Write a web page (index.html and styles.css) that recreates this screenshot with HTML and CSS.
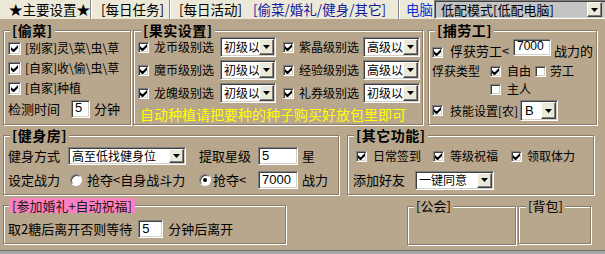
FILE: index.html
```html
<!DOCTYPE html>
<html lang="zh-CN">
<head>
<meta charset="utf-8">
<title>主要设置</title>
<link rel="stylesheet" href="styles.css">
</head>
<body>
<div class="app">
  <div class="tabs">
    <div class="tab sep t1">★主要设置★</div>
    <div class="tab sep t2">[每日任务]</div>
    <div class="tab t3">[每日活动]</div>
    <div class="tab sep t4">[偷菜/婚礼/健身/其它]</div>
    <div class="pc">电脑</div>
    <div class="mode sunk">
      <span class="mode-text">低配模式[低配电脑]</span>
      <span class="btn mode-btn"><svg class="tri" viewBox="0 0 7 4" width="7" height="4"><polygon points="0,0 7,0 3.5,4"/></svg></span>
    </div>
  </div>

  <div class="main">
    <div class="row r1">
      <div class="box steal">
        <div class="title">[偷菜]</div>
        <div class="line sl first"><span class="cb sunk"><svg class="ck" viewBox="0 0 7 7" width="7" height="7"><polygon points="0,2 2,4 3,4 7,0 7,3 3,7 2,7 0,5"/></svg></span><span class="lb12 sl-lb">[别家]灵\菜\虫\草</span></div>
        <div class="line sl"><span class="cb sunk"><svg class="ck" viewBox="0 0 7 7" width="7" height="7"><polygon points="0,2 2,4 3,4 7,0 7,3 3,7 2,7 0,5"/></svg></span><span class="lb12 sl-lb">[自家]收\偷\虫\草</span></div>
        <div class="line sl"><span class="cb sunk"><svg class="ck" viewBox="0 0 7 7" width="7" height="7"><polygon points="0,2 2,4 3,4 7,0 7,3 3,7 2,7 0,5"/></svg></span><span class="lb12 sl-lb">[自家]种植</span></div>
        <div class="line ctime"><span class="lb ct-lb">检测时间</span><span class="edit sunk ct-edit">5</span><span class="lb ct-unit">分钟</span></div>
      </div>

      <div class="box fruit">
        <div class="title">[果实设置]</div>
        <div class="line fr first">
          <span class="cb sm sunk"><svg class="ck" viewBox="0 0 7 7" width="7" height="7"><polygon points="0,2 2,4 3,4 7,0 7,3 3,7 2,7 0,5"/></svg></span><span class="lb12 fr-lb">龙币级别选</span>
          <span class="combo sunk fr-c1"><span class="cv">初级以</span><span class="btn"><svg class="tri" viewBox="0 0 7 4" width="7" height="4"><polygon points="0,0 7,0 3.5,4"/></svg></span></span>
          <span class="cb sm sunk fr-cb2"><svg class="ck" viewBox="0 0 7 7" width="7" height="7"><polygon points="0,2 2,4 3,4 7,0 7,3 3,7 2,7 0,5"/></svg></span><span class="lb12 fr-lb2">紫晶级别选</span>
          <span class="combo sunk fr-c2"><span class="cv">高级以</span><span class="btn"><svg class="tri" viewBox="0 0 7 4" width="7" height="4"><polygon points="0,0 7,0 3.5,4"/></svg></span></span>
        </div>
        <div class="line fr">
          <span class="cb sm sunk"><svg class="ck" viewBox="0 0 7 7" width="7" height="7"><polygon points="0,2 2,4 3,4 7,0 7,3 3,7 2,7 0,5"/></svg></span><span class="lb12 fr-lb">魔币级别选</span>
          <span class="combo sunk fr-c1"><span class="cv">初级以</span><span class="btn"><svg class="tri" viewBox="0 0 7 4" width="7" height="4"><polygon points="0,0 7,0 3.5,4"/></svg></span></span>
          <span class="cb sm sunk fr-cb2"><svg class="ck" viewBox="0 0 7 7" width="7" height="7"><polygon points="0,2 2,4 3,4 7,0 7,3 3,7 2,7 0,5"/></svg></span><span class="lb12 fr-lb2">经验级别选</span>
          <span class="combo sunk fr-c2"><span class="cv">高级以</span><span class="btn"><svg class="tri" viewBox="0 0 7 4" width="7" height="4"><polygon points="0,0 7,0 3.5,4"/></svg></span></span>
        </div>
        <div class="line fr">
          <span class="cb sm sunk"><svg class="ck" viewBox="0 0 7 7" width="7" height="7"><polygon points="0,2 2,4 3,4 7,0 7,3 3,7 2,7 0,5"/></svg></span><span class="lb12 fr-lb">龙魄级别选</span>
          <span class="combo sunk fr-c1"><span class="cv">初级以</span><span class="btn"><svg class="tri" viewBox="0 0 7 4" width="7" height="4"><polygon points="0,0 7,0 3.5,4"/></svg></span></span>
          <span class="cb sm sunk fr-cb2"><svg class="ck" viewBox="0 0 7 7" width="7" height="7"><polygon points="0,2 2,4 3,4 7,0 7,3 3,7 2,7 0,5"/></svg></span><span class="lb12 fr-lb2">礼券级别选</span>
          <span class="combo sunk fr-c2"><span class="cv">初级以</span><span class="btn"><svg class="tri" viewBox="0 0 7 4" width="7" height="4"><polygon points="0,0 7,0 3.5,4"/></svg></span></span>
        </div>
        <div class="hint">自动种植请把要种的种子购买好放包里即可</div>
      </div>

      <div class="box catch">
        <div class="title">[捕劳工]</div>
        <div class="line c1">
          <span class="cb sm sunk c1-cb"><svg class="ck" viewBox="0 0 7 7" width="7" height="7"><polygon points="0,2 2,4 3,4 7,0 7,3 3,7 2,7 0,5"/></svg></span>
          <span class="lb c1-lb">俘获劳工&lt;</span>
          <span class="edit sunk c1-edit">7000</span>
          <span class="lb c1-unit">战力的</span>
        </div>
        <div class="line c2">
          <span class="lb12 c2-lb">俘获类型</span>
          <span class="cb sm sunk c2-cb"><svg class="ck" viewBox="0 0 7 7" width="7" height="7"><polygon points="0,2 2,4 3,4 7,0 7,3 3,7 2,7 0,5"/></svg></span><span class="lb12 c2-free">自由</span>
          <span class="cb sm sunk c2-cb2"></span><span class="lb12 c2-work">劳工</span>
        </div>
        <div class="line c3">
          <span class="cb sm sunk c3-cb"></span><span class="lb12 c3-lb">主人</span>
        </div>
        <div class="line c4">
          <span class="cb sm sunk c4-cb"><svg class="ck" viewBox="0 0 7 7" width="7" height="7"><polygon points="0,2 2,4 3,4 7,0 7,3 3,7 2,7 0,5"/></svg></span><span class="lb12 c4-lb">技能设置[农]</span>
          <span class="combo sunk c4-combo"><span class="cv cv-latin">B</span><span class="btn"><svg class="tri" viewBox="0 0 7 4" width="7" height="4"><polygon points="0,0 7,0 3.5,4"/></svg></span></span>
        </div>
      </div>
    </div>

    <div class="row r2">
      <div class="box gym">
        <div class="title">[健身房]</div>
        <div class="gym-grid">
          <span class="lb">健身方式</span>
          <span class="cell"><span class="combo sunk gym-combo"><span class="cv">高至低找健身位</span><span class="btn"><svg class="tri" viewBox="0 0 7 4" width="7" height="4"><polygon points="0,0 7,0 3.5,4"/></svg></span></span></span>
          <span class="lb">提取星级</span>
          <span class="cell"><span class="edit sunk gym-edit">5</span></span>
          <span class="lb">星</span>

          <span class="lb">设定战力</span>
          <span class="cell"><span class="rd rd1"></span><span class="lb rd-lb">抢夺&lt;自身战斗力</span></span>
          <span class="cell"><span class="rd on"></span><span class="lb rd-lb2">抢夺&lt;</span></span>
          <span class="cell"><span class="edit sunk gym-edit">7000</span></span>
          <span class="lb">战力</span>
        </div>
      </div>

      <div class="box other">
        <div class="title">[其它功能]</div>
        <div class="line o1">
          <span class="cb sm sunk o-cb1"><svg class="ck" viewBox="0 0 7 7" width="7" height="7"><polygon points="0,2 2,4 3,4 7,0 7,3 3,7 2,7 0,5"/></svg></span><span class="lb12 o-lb1">日常签到</span>
          <span class="cb sm sunk o-cb2"><svg class="ck" viewBox="0 0 7 7" width="7" height="7"><polygon points="0,2 2,4 3,4 7,0 7,3 3,7 2,7 0,5"/></svg></span><span class="lb12 o-lb2">等级祝福</span>
          <span class="cb sm sunk o-cb3"><svg class="ck" viewBox="0 0 7 7" width="7" height="7"><polygon points="0,2 2,4 3,4 7,0 7,3 3,7 2,7 0,5"/></svg></span><span class="lb12 o-lb3">领取体力</span>
        </div>
        <div class="line o2">
          <span class="lb o2-lb">添加好友</span>
          <span class="combo sunk o2-combo"><span class="cv">一键同意</span><span class="btn"><svg class="tri" viewBox="0 0 7 4" width="7" height="4"><polygon points="0,0 7,0 3.5,4"/></svg></span></span>
        </div>
      </div>
    </div>

    <div class="row r3">
      <div class="box wed">
        <div class="title pink">[参加婚礼+自动祝福]</div>
        <div class="line w1">
          <span class="lb w-lb">取2糖后离开否则等待</span>
          <span class="edit sunk w-edit">5</span>
          <span class="lb w-unit">分钟后离开</span>
        </div>
      </div>
      <div class="box guild">
        <div class="title plain">[公会]</div>
      </div>
      <div class="box bag">
        <div class="title plain">[背包]</div>
      </div>
    </div>
  </div>
  <div class="footer"></div>
</div>
</body>
</html>
```

FILE: styles.css
```css
* { box-sizing: border-box; }

body {
  margin: 0;
  width: 605px;
  height: 254px;
  overflow: hidden;
  background: #b8a68d;
  font-family: "Noto Sans CJK SC", "Noto Sans", sans-serif;
  font-size: 13px;
  color: #000;
}

.app {
  display: flex;
  flex-direction: column;
  height: 254px;
}

/* ---------- top tab strip ---------- */
.tabs {
  display: flex;
  flex: none;
  height: 19px;
  background: #ece9d8;
  font-size: 13.5px;
  line-height: 19px;
  white-space: nowrap;
}
.tab { height: 19px; padding-left: 9px; flex: none; }
.tab.sep { border-right: 1px solid #8a8a8a; box-shadow: 1px 0 0 #fff; }
.t1 { width: 91px; }
.t2 { width: 78px; margin-left: 1px; }
.t3 { width: 74px; }
.t4 { width: 155px; color: #16169a; }
.pc { width: 34px; flex: none; padding-left: 6px; color: #0a32d2; margin-left: 1px; }

.mode {
  width: 172px;
  height: 19px;
  flex: none;
  display: flex;
  align-items: stretch;
  padding: 1px;
  background: #c4c4c4;
}
.mode-text { flex: 1; padding-left: 5px; font-size: 13px; line-height: 15px; }
.mode-btn { width: 17px; margin-right: 2px; }

/* ---------- shared widgets ---------- */
.sunk {
  border: 1px solid;
  border-color: #808080 #fff #fff #808080;
  box-shadow: inset 1px 1px 0 #404040, inset -1px -1px 0 #d4d0c8;
}

.cb {
  flex: none;
  width: 13px;
  height: 13px;
  background: #fff;
  display: flex;
  align-items: center;
  justify-content: center;
}
.cb.sm { width: 11px; height: 11px; }
.ck { display: block; fill: #000; }

.rd {
  flex: none;
  width: 12px;
  height: 12px;
  border-radius: 50%;
  background: #fff;
  border: 1px solid;
  border-color: #808080 #fff #fff #808080;
  box-shadow: inset 1px 1px 0 #404040;
  display: flex;
  align-items: center;
  justify-content: center;
}
.rd.on::after {
  content: "";
  width: 4px;
  height: 4px;
  border-radius: 50%;
  background: #000;
}

.combo {
  flex: none;
  display: flex;
  align-items: stretch;
  padding: 1px;
  background: #fff;
}
.cv {
  flex: 1;
  min-width: 0;
  align-self: center;
  white-space: nowrap;
  padding-left: 2px;
  font-size: 12px;
  line-height: 14px;
}
.cv-latin { font-family: "Liberation Sans", sans-serif; font-size: 13px; padding-left: 3px; }
.btn {
  flex: none;
  width: 15px;
  background: #ece9d8;
  border: 1px solid;
  border-color: #fff #404040 #404040 #fff;
  box-shadow: inset -1px -1px 0 #808080;
  display: flex;
  align-items: center;
  justify-content: center;
}
.tri { display: block; fill: #000; }

.edit {
  flex: none;
  background: #fff;
  font-family: "Liberation Sans", sans-serif;
  font-size: 13px;
  padding-left: 3px;
  line-height: 14px;
}

.lb { flex: none; white-space: nowrap; font-size: 13px; line-height: 16px; }
.lb12 { flex: none; white-space: nowrap; font-size: 12px; line-height: 16px; }

/* ---------- group boxes ---------- */
.main {
  height: 231px;
  flex: none;
  display: flex;
  flex-direction: column;
}
.row { display: flex; align-items: flex-start; flex: none; }
.r1 { margin-top: 11px; }
.r2 { margin-top: 10px; }
.r3 { margin-top: 10px; }

.box {
  flex: none;
  display: flex;
  flex-direction: column;
  border: 1px solid #8a7c69;
  box-shadow: inset 1px 1px 0 #fff, 1px 1px 0 #fff;
}

.title {
  align-self: flex-start;
  margin: -8px 0 0 6px;
  padding: 0 2px;
  height: 14px;
  line-height: 14px;
  background: #b8a68d;
  font-size: 14px;
  font-weight: bold;
  letter-spacing: 0.5px;
  white-space: nowrap;
}
.title.plain { font-weight: normal; font-size: 13px; letter-spacing: 0; }
.title.pink {
  margin-left: 5px;
  padding: 0 3px;
  height: 15px;
  line-height: 15px;
  background: #ff80c0;
  color: #1a1a1a;
  font-weight: normal;
  font-size: 13px;
  letter-spacing: 0;
}

.line { display: flex; align-items: center; flex: none; }

/* 偷菜 */
.steal { width: 128px; height: 95px; margin-left: 3px; }
.sl { height: 20px; padding-left: 4px; }
.sl.first { margin-top: 1px; }
.sl-lb { margin-left: 4px; }
.ctime { margin-top: 2px; height: 18px; padding-left: 4px; }
.ct-edit { width: 19px; height: 18px; margin-left: 11px; }
.ct-unit { margin-left: 4px; }

/* 果实设置 */
.fruit { width: 290px; height: 95px; margin-left: 2px; }
.fruit .title { margin-left: 7px; }
.fr { height: 20px; padding-left: 4px; margin-top: 3px; }
.fr.first { margin-top: 0; }
.fr-lb { width: 60px; margin-left: 5px; }
.fr-c1 { width: 56px; height: 20px; margin-left: 6px; }
.fr-cb2 { margin-left: 7px; }
.fr-lb2 { width: 60px; margin-left: 5px; }
.fr-c2 { width: 57px; height: 20px; margin-left: 4px; }
.hint {
  margin: 3px 0 0 6px;
  font-size: 14px;
  line-height: 16px;
  color: #ffff00;
  white-space: nowrap;
}

/* 捕劳工 */
.catch { width: 169px; height: 95px; margin-left: 5px; }
.catch .title { margin-left: 6px; }
.c1 { align-items: flex-start; margin-top: 2px; height: 19px; padding-left: 3px; }
.c1-cb { margin-top: 8px; }
.c1-lb { width: 60px; margin: 5px 0 0 7px; line-height: 14px; }
.c1-edit { width: 38px; height: 17px; margin-left: 3px; font-size: 12px; line-height: 13px; }
.c1-unit { margin: 5px 0 0 3px; line-height: 14px; }
.c2 { height: 18px; margin-top: 4px; padding-left: 3px; }
.c2-lb { width: 48px; }
.c2-cb { margin-left: 10px; }
.c2-free { width: 24px; margin-left: 6px; }
.c2-cb2 { margin-left: 4px; }
.c2-work { margin-left: 4px; }
.c3 { height: 18px; padding-left: 61px; }
.c3-lb { margin-left: 6px; }
.c4 { height: 21px; margin-top: 2px; padding-left: 3px; }
.c4-lb { width: 66px; margin-left: 7px; }
.c4-combo { width: 38px; height: 21px; margin-left: 4px; }

/* 健身房 */
.gym { width: 336px; height: 60px; margin-left: 3px; }
.gym-grid {
  display: grid;
  grid-template-columns: 60px 131px 59px 44px auto;
  grid-auto-rows: 20px;
  row-gap: 4px;
  align-items: center;
  margin: 4px 0 0 4px;
}
.cell { display: flex; align-items: center; }
.gym-combo { width: 118px; height: 18px; }
.gym-edit { width: 40px; height: 18px; line-height: 15px; }
.rd1 { margin-left: 2px; }
.rd-lb { margin-left: 5px; }
.rd-lb2 { margin-left: 2px; }

/* 其它功能 */
.other { width: 247px; height: 60px; margin-left: 8px; }
.o1 { height: 20px; margin-top: 4px; padding-left: 8px; }
.o-lb1 { width: 46px; margin-left: 6px; }
.o-cb2 { margin-left: 14px; }
.o-lb2 { width: 48px; margin-left: 6px; }
.o-cb3 { margin-left: 13px; }
.o-lb3 { margin-left: 5px; }
.o2 { height: 20px; margin-top: 4px; padding-left: 5px; }
.o2-lb { width: 52px; }
.o2-combo { width: 79px; height: 19px; margin-left: 10px; }

/* 婚礼 / 公会 / 背包 */
.wed { width: 283px; height: 39px; margin-left: 3px; }
.w1 { height: 18px; margin-top: 7px; padding-left: 4px; }
.w-edit { width: 25px; height: 18px; margin-left: 6px; line-height: 15px; }
.w-unit { margin-left: 5px; }
.guild { width: 109px; height: 39px; margin: 1px 0 0 121px; }
.bag { width: 73px; height: 38px; margin: 1px 0 0 2px; }
.bag .title { margin-left: 7px; }

.footer {
  flex: none;
  height: 4px;
  border-top: 1px solid #6e6e6e;
  background: #a6a6a6;
}
```
